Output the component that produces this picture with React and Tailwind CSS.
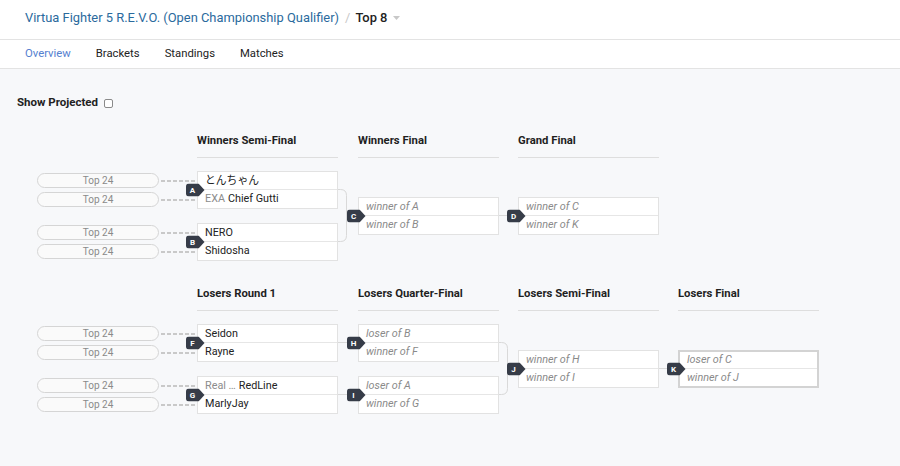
import React from "react";

const Badge = ({ l, thick }) => (
  <div
    className={`absolute top-1/2 -translate-y-1/2 w-[19px] h-[13px] z-10 ${
      thick ? "left-[-13px]" : "left-[-12px]"
    }`}
  >
    <svg width="19" height="13" viewBox="0 0 19 13" className="block">
      <path
        d="M3 0H12.5L18.5 6.5L12.5 13H3A3 3 0 0 1 0 10V3A3 3 0 0 1 3 0Z"
        fill="#363c48"
      />
    </svg>
    <span className="absolute left-0 top-0 w-[13px] h-[13px] flex items-center justify-center text-white text-[8px] font-bold leading-none">
      {l}
    </span>
  </div>
);

const Row = ({ r, first, thick }) => {
  const base = `${thick ? "h-[17px]" : "h-[18px]"} flex items-center pl-[7px] pt-[1px] text-[10.8px] leading-none whitespace-nowrap overflow-hidden ${
    first ? "border-b border-[#e6e6e6]" : ""
  }`;
  if (r.ph) {
    return <div className={`${base} italic text-[#8a8a8a]`}>{r.ph}</div>;
  }
  return (
    <div className={`${base} text-[#222]`}>
      {r.pre && <span className="text-[#8c8c8c] mr-[3px]">{r.pre}</span>}
      <span>{r.name}</span>
    </div>
  );
};

const Match = ({ id, rows, thick, className = "" }) => (
  <div
    className={`relative w-[141px] bg-white ${
      thick ? "border-2 border-[#d3d3d3]" : "border border-[#e2e2e2]"
    } ${className}`}
  >
    <Row r={rows[0]} first thick={thick} />
    <Row r={rows[1]} thick={thick} />
    <Badge l={id} thick={thick} />
  </div>
);

const Pill = () => (
  <div className="h-[19px] flex items-center">
    <div className="w-[122px] h-[15px] rounded-full border border-[#d5d5d5] bg-[#fafafa] flex items-center justify-center text-[10px] leading-none text-[#8a8a8a]">
      Top 24
    </div>
    <div className="ml-[2px] flex-1 h-[2px] bg-[repeating-linear-gradient(to_right,#c9c9c9_0_4px,transparent_4px_6px)]" />
  </div>
);

const Entrants = () => (
  <div className="w-[160px]">
    <div className="h-[26px]" />
    <div className="mt-[13px] flex flex-col">
      <Pill />
      <Pill />
      <div className="h-[14px]" />
      <Pill />
      <Pill />
    </div>
  </div>
);

const Col = ({ title, children }) => (
  <div className="w-[141px]">
    <div className="h-[26px] border-b border-[#dedede] pt-[1px] text-[11.3px] font-bold leading-[16px] text-[#1f1f1f] whitespace-nowrap">
      {title}
    </div>
    <div className="mt-[13px] flex flex-col">{children}</div>
  </div>
);

const Gap = ({ w, d }) => (
  <div style={{ width: w }} className="shrink-0">
    <div className="h-[26px]" />
    <div className="mt-[13px]">
      <svg width={w} height="90" viewBox={`0 0 ${w} 90`} className="block">
        <path d={d} fill="none" stroke="#d9d9d9" strokeWidth="1" />
      </svg>
    </div>
  </div>
);

export default function App() {
  return (
    <div className="min-h-[466px] bg-[#f7f8fa] [font-family:Roboto,'Noto_Sans_CJK_JP',sans-serif] text-[#222]">
      <header className="h-[40px] bg-white border-b border-[#e3e3e3] flex items-center pb-[4px] pl-[25px]">
        <span className="text-[12.9px] text-[#2a6a9d]">
          Virtua Fighter 5 R.E.V.O. (Open Championship Qualifier)
        </span>
        <span className="text-[12.9px] text-[#c8c8c8] ml-[6px] mr-[5px]">/</span>
        <span className="text-[12.9px] font-medium text-[#222]">Top 8</span>
        <svg width="7" height="4" viewBox="0 0 7 4" className="ml-[6px]">
          <path d="M0 0H7L3.5 4Z" fill="#c8c8c8" />
        </svg>
      </header>
      <nav className="h-[29px] bg-white border-b border-[#e3e3e3] flex items-center pl-[25px] gap-[25px] text-[11.3px]">
        <span className="text-[#5580cf]">Overview</span>
        <span className="text-[#222]">Brackets</span>
        <span className="text-[#222]">Standings</span>
        <span className="text-[#222]">Matches</span>
      </nav>

      <div className="mt-[27px] h-[14px] flex items-center pl-[17px]">
        <span className="text-[11.5px] font-bold text-[#222]">Show Projected</span>
        <span className="ml-[6px] w-[9px] h-[9px] rounded-[2px] border border-[#8a8a8a] bg-white" />
      </div>

      {/* Winners */}
      <div className="mt-[22px] flex pl-[37px]">
        <Entrants />
        <Col title="Winners Semi-Final">
          <Match id="A" rows={[{ name: "とんちゃん" }, { pre: "EXA", name: "Chief Gutti" }]} />
          <Match id="B" className="mt-[14px]" rows={[{ name: "NERO" }, { name: "Shidosha" }]} />
        </Col>
        <Gap
          w={20}
          d="M0 18.5H2.5Q8.5 18.5 8.5 24.5V64.5Q8.5 70.5 2.5 70.5H0M8.5 44.5H20"
        />
        <Col title="Winners Final">
          <Match id="C" className="mt-[26px]" rows={[{ ph: "winner of A" }, { ph: "winner of B" }]} />
        </Col>
        <Gap w={19} d="M0 44.5H19" />
        <Col title="Grand Final">
          <Match id="D" className="mt-[26px]" rows={[{ ph: "winner of C" }, { ph: "winner of K" }]} />
        </Col>
      </div>

      {/* Losers */}
      <div className="mt-[24px] flex pl-[37px]">
        <Entrants />
        <Col title="Losers Round 1">
          <Match id="F" rows={[{ name: "Seidon" }, { name: "Rayne" }]} />
          <Match id="G" className="mt-[14px]" rows={[{ pre: "Real …", name: "RedLine" }, { name: "MarlyJay" }]} />
        </Col>
        <Gap w={20} d="M0 18.5H20M0 70.5H20" />
        <Col title="Losers Quarter-Final">
          <Match id="H" rows={[{ ph: "loser of B" }, { ph: "winner of F" }]} />
          <Match id="I" className="mt-[14px]" rows={[{ ph: "loser of A" }, { ph: "winner of G" }]} />
        </Col>
        <Gap
          w={19}
          d="M0 18.5H2.5Q8.5 18.5 8.5 24.5V64.5Q8.5 70.5 2.5 70.5H0M8.5 44.5H19"
        />
        <Col title="Losers Semi-Final">
          <Match id="J" className="mt-[26px]" rows={[{ ph: "winner of H" }, { ph: "winner of I" }]} />
        </Col>
        <Gap w={19} d="M0 44.5H19" />
        <Col title="Losers Final">
          <Match id="K" thick className="mt-[26px]" rows={[{ ph: "loser of C" }, { ph: "winner of J" }]} />
        </Col>
      </div>
    </div>
  );
}
